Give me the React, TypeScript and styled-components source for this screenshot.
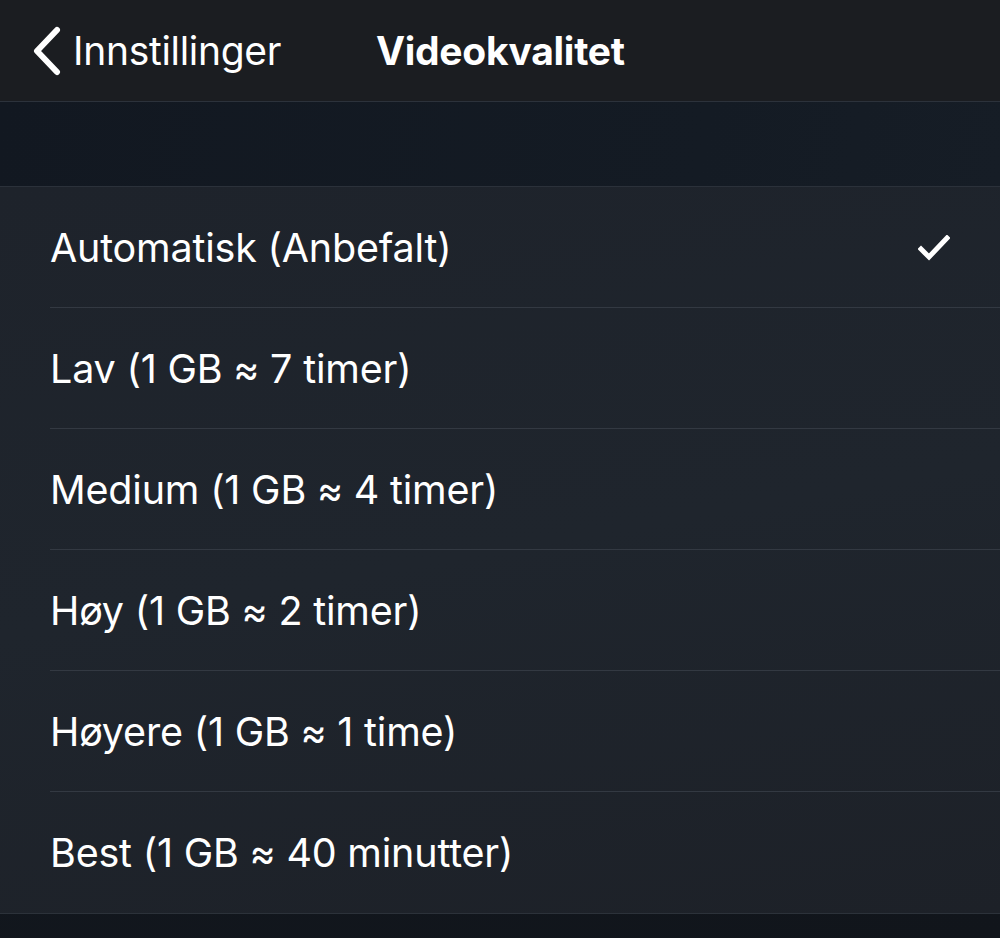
import React from "react";
import styled, { createGlobalStyle } from "styled-components";

const Global = createGlobalStyle`
  html, body { margin: 0; padding: 0; background: #12161c; }
  body { font-family: "Inter", "Roboto", "Liberation Sans", sans-serif; -webkit-font-smoothing: antialiased; }
`;

const Page = styled.div`
  width: 1000px;
  height: 938px;
  overflow: hidden;
  display: flex;
  flex-direction: column;
  background: linear-gradient(160deg, #141a22 0%, #12171e 60%, #11151b 100%);
`;

const NavBar = styled.header`
  height: 101px;
  flex: none;
  background: #1b1d21;
  border-bottom: 1px solid #2c323b;
  display: flex;
  align-items: center;
  position: relative;
`;

const BackButton = styled.div`
  display: flex;
  align-items: center;
  color: #ffffff;
  padding-left: 31px;
  gap: 10px;
  font-size: 39px;
  letter-spacing: -0.3px;
`;

const Title = styled.div`
  position: absolute;
  left: 376px;
  top: 0;
  height: 101px;
  display: flex;
  align-items: center;
  color: #ffffff;
  font-weight: 700;
  font-size: 39px;
  letter-spacing: -0.3px;
`;

const Spacer = styled.div`
  height: 84px;
  flex: none;
  background: linear-gradient(100deg, #121821 0%, #141b24 70%, #161d26 100%);
  border-bottom: 1px solid #2b313a;
`;

const List = styled.ul`
  list-style: none;
  margin: 0;
  padding: 0;
  background: linear-gradient(170deg, #1e232b 0%, #1f252d 50%, #1d2128 100%);
  border-bottom: 1px solid #2c323a;
`;

const Row = styled.li<{ $last?: boolean }>`
  height: 121px;
  display: flex;
  align-items: center;
  justify-content: space-between;
  padding: 0 50px;
  position: relative;
  color: #ffffff;
  font-size: 39.5px;
  letter-spacing: -0.2px;
  box-sizing: border-box;
  &::after {
    content: "";
    display: ${(p) => (p.$last ? "none" : "block")};
    position: absolute;
    left: 50px;
    right: 0;
    bottom: 0;
    height: 1px;
    background: #333942;
  }
`;

const Check = () => (
  <svg width="32" height="26" viewBox="0 0 32 26">
    <path d="M3 14 L11 22 L29 3" fill="none" stroke="#fff" strokeWidth="5" strokeLinecap="square" />
  </svg>
);

const Chevron = () => (
  <svg width="32" height="50" viewBox="0 0 32 50">
    <path d="M26 4 L6 25 L26 46" fill="none" stroke="#fff" strokeWidth="6" strokeLinecap="round" strokeLinejoin="round" />
  </svg>
);

const options = [
  "Automatisk (Anbefalt)",
  "Lav (1 GB ≈ 7 timer)",
  "Medium (1 GB ≈ 4 timer)",
  "Høy (1 GB ≈ 2 timer)",
  "Høyere (1 GB ≈ 1 time)",
  "Best (1 GB ≈ 40 minutter)",
];

export default function App() {
  return (
    <>
      <Global />
      <Page>
        <NavBar>
          <BackButton>
            <Chevron />
            <span>Innstillinger</span>
          </BackButton>
          <Title>Videokvalitet</Title>
        </NavBar>
        <Spacer />
        <List>
          {options.map((o, i) => (
            <Row key={o} $last={i === options.length - 1}>
              <span>{o}</span>
              {i === 0 && <Check />}
            </Row>
          ))}
        </List>
      </Page>
    </>
  );
}
